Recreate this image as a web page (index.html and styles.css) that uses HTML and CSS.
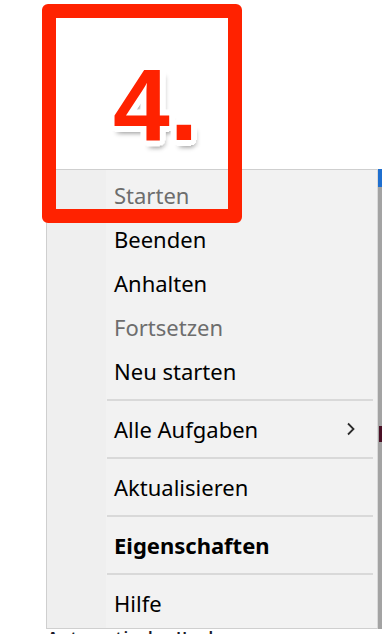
FILE: index.html
```html
<!DOCTYPE html>
<html lang="de">
<head>
<meta charset="UTF-8">
<meta name="viewport" content="width=device-width, initial-scale=1.0">
<title>Dienst – Kontextmenü</title>
<link rel="stylesheet" href="styles.css">
</head>
<body>

<div class="stage">
  <div class="desk">

    <!-- Kontextmenü -->
    <div class="menu">
      <div class="item disabled">Starten</div>
      <div class="item">Beenden</div>
      <div class="item">Anhalten</div>
      <div class="item disabled">Fortsetzen</div>
      <div class="item">Neu starten</div>
      <div class="sep"></div>
      <div class="item sub">
        <span>Alle Aufgaben</span>
        <svg class="chev" width="10" height="14" viewBox="0 0 10 14">
          <path d="M2 1.5 L7.5 7 L2 12.5" fill="none" stroke="#2b2b2b" stroke-width="1.8"/>
        </svg>
      </div>
      <div class="sep"></div>
      <div class="item">Aktualisieren</div>
      <div class="sep"></div>
      <div class="item bold">Eigenschaften</div>
      <div class="sep"></div>
      <div class="item">Hilfe</div>
    </div>

    <!-- Fensterrand dahinter -->
    <div class="edge">
      <div class="edge-top"></div>
      <div class="edge-mark"></div>
    </div>
  </div>

  <div class="behind">Automatisch &nbsp; Hoch</div>

  <!-- Markierung -->
  <div class="badge">
    <span class="step">4.</span>
  </div>
</div>

</body>
</html>
```

FILE: styles.css
```css
html, body {
  margin: 0;
  height: 634px;
  overflow: hidden;
  background: #fff;
}
.stage {
  position: relative;
  padding-top: 169px;
  font-family: "Noto Sans", "Open Sans", sans-serif;
}
.desk {
  display: flex;
  margin-left: 46px;
}
.menu {
  width: 331px;
  padding: 3px 0 3px;
  border: 1px solid #cfcfcf;
  border-right-color: #dadada;
  background: linear-gradient(to right, #efefef 59px, #f2f2f2 59px);
}
.item {
  height: 44px;
  line-height: 44px;
  padding-left: 67px;
  font-size: 22px;
  color: #000;
}
.item.disabled {
  color: #6d6d6d;
}
.item.bold {
  font-weight: bold;
}
.sub {
  display: flex;
  justify-content: space-between;
  align-items: center;
  padding-right: 21px;
}
.chev {
  display: block;
}
.sep {
  height: 2px;
  margin: 6px 4px 6px 60px;
  background: #d9d9d9;
}
.edge {
  width: 4px;
  background: #a3a3a3;
  display: flex;
  flex-direction: column;
}
.edge-top {
  height: 18px;
  background: #1f6fcf;
}
.edge-mark {
  height: 16px;
  margin-top: 239px;
  margin-left: 1px;
  background: #4a1025;
}
.behind {
  margin: 1px 0 0 48px;
  font-size: 14px;
  font-weight: bold;
  line-height: 14px;
  color: #1a1a2a;
  letter-spacing: 2px;
}
.badge {
  position: absolute;
  left: 42px;
  top: 4px;
  width: 172px;
  height: 191px;
  border: 14px solid #ff2200;
  border-radius: 6px;
}
.step {
  display: block;
  margin: 36px 0 0 57px;
  font-family: "Liberation Sans", Arial, sans-serif;
  font-size: 102px;
  font-weight: bold;
  line-height: 1;
  color: #ff2200;
  text-shadow:
    0 -6px 0 #fff, 0 6px 0 #fff, -6px 0 0 #fff, 6px 0 0 #fff,
    -4px -4px 0 #fff, 4px -4px 0 #fff, -4px 4px 0 #fff, 4px 4px 0 #fff,
    -5px -3px 0 #fff, 5px -3px 0 #fff, -5px 3px 0 #fff, 5px 3px 0 #fff,
    -3px -5px 0 #fff, 3px -5px 0 #fff, -3px 5px 0 #fff, 3px 5px 0 #fff,
    2px 8px 4px rgba(0, 0, 0, 0.25), 6px 6px 4px rgba(0, 0, 0, 0.2);
}
```
